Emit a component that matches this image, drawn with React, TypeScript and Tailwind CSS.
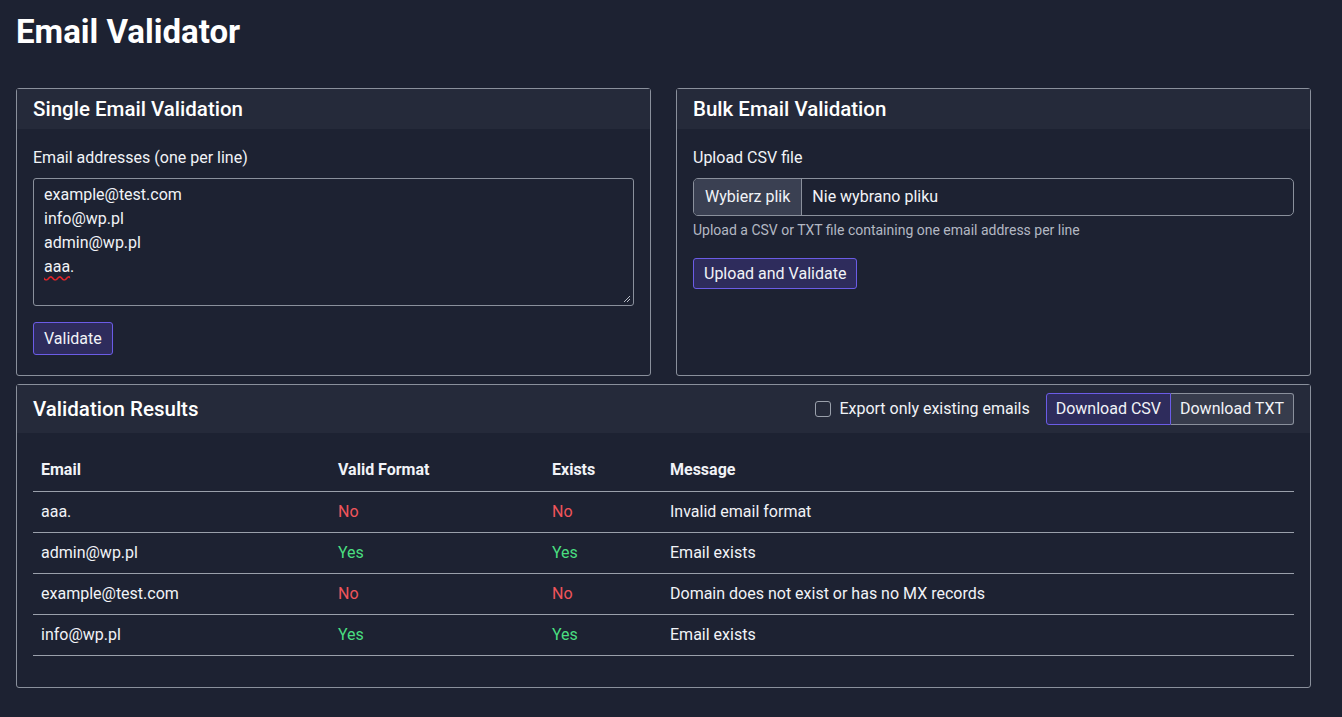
const results = [
  { email: "aaa.", valid: false, exists: false, message: "Invalid email format" },
  { email: "admin@wp.pl", valid: true, exists: true, message: "Email exists" },
  { email: "example@test.com", valid: false, exists: false, message: "Domain does not exist or has no MX records" },
  { email: "info@wp.pl", valid: true, exists: true, message: "Email exists" },
]

function YesNo({ ok }: { ok: boolean }) {
  return <span className={ok ? "text-[#4ade80]" : "text-[#f0555b]"}>{ok ? "Yes" : "No"}</span>
}

export default function App() {
  return (
    <div
      className="min-h-[717px] bg-[#1d2232] text-[#f1f3f7] text-[16px] px-4 pb-8"
      style={{ fontFamily: "Roboto, 'Noto Sans', sans-serif" }}
    >
      <h1 className="pt-[12px] text-[33px] font-bold leading-[40px] text-white">Email Validator</h1>

      <div className="mt-[36px] w-[1295px] flex flex-col gap-[8px]">
        <div className="grid grid-cols-2 gap-[25px]">
          {/* Single */}
          <div className="border border-[#8a909c] rounded-[3px] h-[288px]">
            <div className="h-[40px] bg-[#252a3a] px-4 flex items-center">
              <h2 className="text-[20.5px] font-medium text-white">Single Email Validation</h2>
            </div>
            <div className="px-4 pt-[18px]">
              <div className="leading-[22px]">Email addresses (one per line)</div>
              <div className="relative mt-[9px] h-[128px] border border-[#8a909c] rounded-[3px] px-[10px] pt-[4px] leading-6">
                <div>example@test.com</div>
                <div>info@wp.pl</div>
                <div>admin@wp.pl</div>
                <div>
                  <span className="underline decoration-wavy decoration-[#e0242a] underline-offset-[3px]">aaa</span>.
                </div>
                <svg className="absolute right-[2px] bottom-[2px]" width="9" height="9" viewBox="0 0 9 9">
                  <path d="M8 2 L2 8 M8 5 L5 8" stroke="#b8bcc6" strokeWidth="1" />
                </svg>
              </div>
              <button className="mt-[16px] h-[33px] px-[10px] bg-[#2e2c5c] border border-[#6b5ce6] rounded-[3px] text-[#f1f3f7]">
                Validate
              </button>
            </div>
          </div>

          {/* Bulk */}
          <div className="border border-[#8a909c] rounded-[3px] h-[288px]">
            <div className="h-[40px] bg-[#252a3a] px-4 flex items-center">
              <h2 className="text-[20.5px] font-medium text-white">Bulk Email Validation</h2>
            </div>
            <div className="px-4 pt-[18px]">
              <div className="leading-[22px]">Upload CSV file</div>
              <div className="mt-[9px] h-[38px] border border-[#8a909c] rounded-[5px] flex items-stretch overflow-hidden">
                <div className="bg-[#3a4052] border-r border-[#8a909c] px-[11px] flex items-center">Wybierz plik</div>
                <div className="px-[10px] flex items-center">Nie wybrano pliku</div>
              </div>
              <div className="mt-[5px] text-[14px] text-[#b3b8c3] leading-[19px]">
                Upload a CSV or TXT file containing one email address per line
              </div>
              <button className="mt-[18px] h-[31px] px-[10px] bg-[#2e2c5c] border border-[#6b5ce6] rounded-[3px] text-[#f1f3f7]">
                Upload and Validate
              </button>
            </div>
          </div>
        </div>

        {/* Results */}
        <div className="border border-[#8a909c] rounded-[3px] h-[304px]">
          <div className="h-[48px] bg-[#252a3a] px-4 flex items-center justify-between">
            <h2 className="text-[20.5px] font-medium text-white">Validation Results</h2>
            <div className="flex items-center">
              <label className="flex items-center gap-[8px] mr-[16px]">
                <span className="w-[16px] h-[16px] border border-[#9aa0ab] rounded-[3px]" />
                <span>Export only existing emails</span>
              </label>
              <div className="flex h-[32px]">
                <button className="px-[9px] bg-[#2e2c5c] border border-[#6b5ce6] rounded-l-[3px] text-[#f1f3f7]">
                  Download CSV
                </button>
                <button className="px-[9px] bg-[#373c4c] border border-l-0 border-[#8a909c] rounded-r-[3px] text-[#f1f3f7]">
                  Download TXT
                </button>
              </div>
            </div>
          </div>
          <div className="px-4 pt-[17px]">
            <table className="w-full border-collapse text-left">
              <thead>
                <tr className="border-b border-[#9aa0ab] h-[41px]">
                  <th className="w-[297px] px-2 font-bold">Email</th>
                  <th className="w-[214px] px-2 font-bold">Valid Format</th>
                  <th className="w-[118px] px-2 font-bold">Exists</th>
                  <th className="px-2 font-bold">Message</th>
                </tr>
              </thead>
              <tbody>
                {results.map((r) => (
                  <tr key={r.email} className="border-b border-[#9aa0ab] h-[41px]">
                    <td className="px-2">{r.email}</td>
                    <td className="px-2"><YesNo ok={r.valid} /></td>
                    <td className="px-2"><YesNo ok={r.exists} /></td>
                    <td className="px-2">{r.message}</td>
                  </tr>
                ))}
              </tbody>
            </table>
          </div>
        </div>
      </div>
    </div>
  )
}
